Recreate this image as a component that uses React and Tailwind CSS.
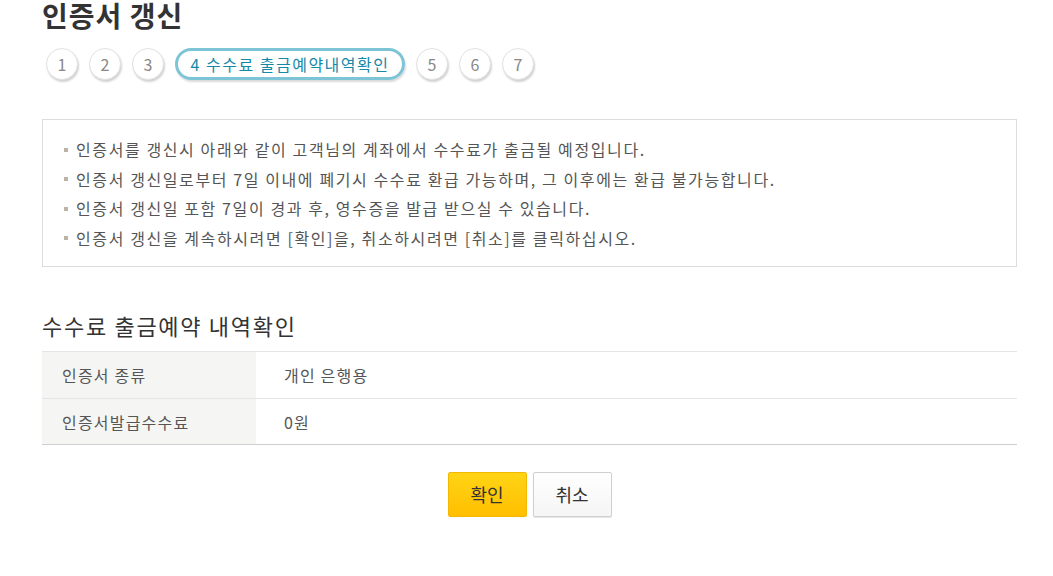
const font = { fontFamily: '"Noto Sans CJK KR", "Liberation Sans", sans-serif' };

const notices = [
  "인증서를 갱신시 아래와 같이 고객님의 계좌에서 수수료가 출금될 예정입니다.",
  "인증서 갱신일로부터 7일 이내에 폐기시 수수료 환급 가능하며, 그 이후에는 환급 불가능합니다.",
  "인증서 갱신일 포함 7일이 경과 후, 영수증을 발급 받으실 수 있습니다.",
  "인증서 갱신을 계속하시려면 [확인]을, 취소하시려면 [취소]를 클릭하십시오.",
];

const rows = [
  { label: "인증서 종류", value: "개인 은행용" },
  { label: "인증서발급수수료", value: "0원" },
];

const Step = ({ n }) => (
  <div className="w-[32px] h-[32px] rounded-full bg-white border border-[#e2e2e2] shadow-[1px_2px_2px_rgba(0,0,0,0.18)] flex items-center justify-center text-[16px] text-[#888]">
    {n}
  </div>
);

const App = () => {
  return (
    <div className="w-[1053px] h-[576px] bg-white overflow-hidden" style={font}>
      <div className="w-[975px] ml-[42px]">
        {/* Title */}
        <h1 className="text-[28px] leading-[31px] font-bold text-[#333] tracking-[1px]">인증서 갱신</h1>

        {/* Steps */}
        <div className="flex items-center mt-[17px] ml-[4px] gap-[11px]">
          <Step n="1" />
          <Step n="2" />
          <Step n="3" />
          <div className="h-[32px] w-[230px] rounded-full border-[3px] border-[#7dc5d6] shadow-[1px_2px_2px_rgba(0,0,0,0.15)] flex items-center justify-center text-[16px] tracking-[1.5px] text-[#1689a7]">
            4 수수료 출금예약내역확인
          </div>
          <Step n="5" />
          <Step n="6" />
          <Step n="7" />
        </div>

        {/* Notice box */}
        <div className="mt-[39px] border border-[#dcdcdc] pt-[15px] pb-[13px] pl-[21px]">
          {notices.map((t, i) => (
            <p key={i} className="flex items-center text-[16px] leading-[29.5px] text-[#555] tracking-[1.6px]">
              <span className="w-[4px] h-[4px] bg-[#bdb2a6] mr-[8px] shrink-0"></span>
              {t}
            </p>
          ))}
        </div>

        {/* Section title */}
        <h2 className="mt-[45px] text-[22px] leading-[26px] text-[#333] tracking-[1.7px]">수수료 출금예약 내역확인</h2>

        {/* Table */}
        <div className="mt-[13px] border-t border-[#e5e5e5] border-b border-b-[#cfcfcf]">
          {rows.map((r, i) => (
            <div key={i} className={`flex h-[46px] ${i > 0 ? "border-t border-[#e5e5e5]" : ""}`}>
              <div className="w-[214px] bg-[#f5f5f3] flex items-center pl-[20px] text-[16px] tracking-[1.2px] text-[#555]">{r.label}</div>
              <div className="flex-1 flex items-center pl-[28px] text-[16px] tracking-[1.2px] text-[#555]">{r.value}</div>
            </div>
          ))}
        </div>

        {/* Buttons */}
        <div className="flex justify-center gap-[6px] mt-[27px]">
          <button className="w-[79px] h-[45px] rounded-[2px] bg-gradient-to-b from-[#ffd414] to-[#ffbf00] border border-[#f5b800] text-[18px] text-[#333]">확인</button>
          <button className="w-[79px] h-[45px] rounded-[2px] bg-gradient-to-b from-white to-[#f5f5f5] border border-[#cfcfcf] shadow-[0_1px_1px_rgba(0,0,0,0.1)] text-[18px] text-[#333]">취소</button>
        </div>
      </div>
    </div>
  );
};

export default App;
